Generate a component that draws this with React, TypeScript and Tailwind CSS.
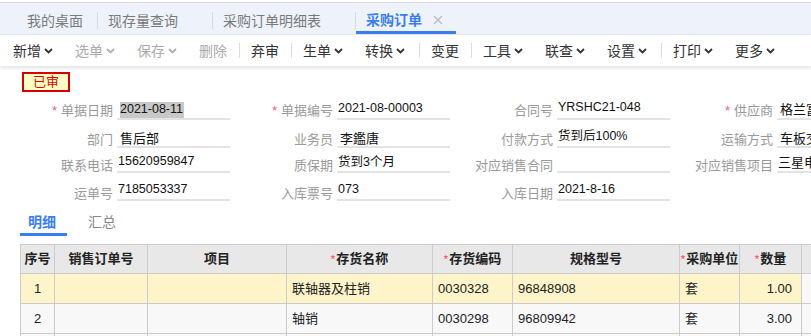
import React from "react";

const FONT = { fontFamily: '"Liberation Sans", "Noto Sans CJK SC", sans-serif' };

function Chevron({ gray }: { gray?: boolean }) {
  return (
    <svg width="9" height="6" viewBox="0 0 9 6" className="ml-[3px] mt-[1px]">
      <path d="M1 1 L4.5 4.5 L8 1" fill="none" stroke={gray ? "#b0b0b0" : "#333"} strokeWidth="1.8" />
    </svg>
  );
}

function Tool({ label, w, drop, gray }: { label: string; w: string; drop?: boolean; gray?: boolean }) {
  return (
    <div className={`flex items-center ${w} ${gray ? "text-[#aaaaaa]" : "text-[#333]"}`}>
      <span>{label}</span>
      {drop && <Chevron gray={gray} />}
    </div>
  );
}

const ToolSep = () => <div className="w-px h-[15px] bg-[#dddddd] mr-[11px]" />;

const TabSep = () => <div className="w-px h-[17px] bg-[#d6dbe3] self-center mt-[4px]" />;

function Field({
  label,
  value,
  req,
  pl = "pl-[1px]",
  pb,
  vpb,
  hl,
  big,
}: {
  label: string;
  value?: string;
  req?: boolean;
  pl?: string;
  pb: string;
  vpb: string;
  hl?: boolean;
  big?: boolean;
}) {
  return (
    <div className="flex items-end w-[220px] shrink-0">
      <div className={`w-[113px] shrink-0 text-right text-[13px] leading-[12px] text-[#9a9a9a] ${pb}`}>
        {req && <span className="text-[#f0607a] mr-[4px]">*</span>}
        {label}
      </div>
      <div className={`ml-[4px] w-[113px] shrink-0 h-full flex items-end border-b-2 border-[#e3e3e3] whitespace-nowrap overflow-hidden ${pl}`}>
        <span
          className={`${big ? "text-[13px]" : "text-[12.5px]"} leading-[15px] text-[#111] ${vpb} ${hl ? "bg-[#c8c8c8] pr-[1px]" : ""}`}
        >
          {value}
        </span>
      </div>
    </div>
  );
}

const cols = [
  { w: "w-[34px]", t: "序号" },
  { w: "w-[93px]", t: "销售订单号" },
  { w: "w-[139px]", t: "项目" },
  { w: "w-[146px]", t: "存货名称", req: true },
  { w: "w-[80px]", t: "存货编码", req: true },
  { w: "w-[167px]", t: "规格型号" },
  { w: "w-[60px]", t: "采购单位", req: true },
  { w: "w-[62px]", t: "数量", req: true },
  { w: "w-[60px]", t: "" },
];

const rows = [
  ["1", "", "", "联轴器及柱销", "0030328", "96848908", "套", "1.00", ""],
  ["2", "", "", "轴销", "0030298", "96809942", "套", "3.00", ""],
];

export default function App() {
  return (
    <div className="w-[811px] h-[336px] overflow-hidden bg-white" style={FONT}>
      <div className="h-[3px] border-b border-[#dcdcdc]" />
      {/* page tabs */}
      <div className="flex h-[32px] bg-[#eef3fb] pl-[16px] text-[14px] leading-[20px] border-b border-[#e6ebf2]">
        <div className="flex items-center pl-[11px] pr-[14px] pt-[5px] text-[#7a7a7a]">我的桌面</div>
        <TabSep />
        <div className="flex items-center pl-[10px] pr-[34px] pt-[5px] text-[#7a7a7a]">现存量查询</div>
        <TabSep />
        <div className="flex items-center pl-[10px] pr-[34px] pt-[5px] text-[#7a7a7a]">采购订单明细表</div>
        <TabSep />
        <div className="flex items-center pl-[10px] pr-[13px] pt-[5px] border-b-[3px] border-[#3a7df0] text-[#3a7df0] font-bold">
          <span>采购订单</span>
          <svg width="10" height="10" viewBox="0 0 10 10" className="ml-[11px]">
            <path d="M1 1 L9 9 M9 1 L1 9" stroke="#bbbbbb" strokeWidth="1.3" />
          </svg>
        </div>
      </div>
      {/* toolbar */}
      <div className="relative z-10 flex items-center h-[31px] pl-[13px] text-[14px] leading-[20px] bg-white shadow-[0_2px_4px_rgba(0,0,0,0.12)]">
        <Tool label="新增" w="w-[62px]" drop />
        <Tool label="选单" w="w-[62px]" drop gray />
        <Tool label="保存" w="w-[62px]" drop gray />
        <Tool label="删除" w="w-[40px]" gray />
        <ToolSep />
        <Tool label="弃审" w="w-[40px]" />
        <ToolSep />
        <Tool label="生单" w="w-[62px]" drop />
        <Tool label="转换" w="w-[54px]" drop />
        <ToolSep />
        <Tool label="变更" w="w-[40px]" />
        <ToolSep />
        <Tool label="工具" w="w-[62px]" drop />
        <Tool label="联查" w="w-[62px]" drop />
        <Tool label="设置" w="w-[54px]" drop />
        <ToolSep />
        <Tool label="打印" w="w-[62px]" drop />
        <Tool label="更多" w="w-[62px]" drop />
      </div>
      {/* status */}
      <div className="ml-[22px] mt-[6px] w-[48px] h-[20px] border-2 border-[#d60000] bg-[#ffffc6] flex items-center justify-center text-[13px] leading-[16px] text-[#e00000]">
        已审
      </div>
      {/* form */}
      <div className="flex h-[28px]">
        <Field label="单据日期" value="2021-08-11" req pb="pb-[3px]" vpb="pb-[1px]" pl="pl-[3px]" hl />
        <Field label="单据编号" value="2021-08-00003" req pb="pb-[3px]" vpb="pb-[2px]" />
        <Field label="合同号" value="YRSHC21-048" pb="pb-[3px]" vpb="pb-[3px]" />
        <Field label="供应商" value="格兰富水泵" req pb="pb-[3px]" vpb="pb-[1px]" pl="pl-[3px]" big />
      </div>
      <div className="flex h-[28px]">
        <Field label="部门" value="售后部" pb="pb-[2px]" vpb="pb-[0px]" pl="pl-[3px]" big />
        <Field label="业务员" value="李鑑唐" pb="pb-[2px]" vpb="pb-[0px]" pl="pl-[3px]" big />
        <Field label="付款方式" value="货到后100%" pb="pb-[2px]" vpb="pb-[2px]" />
        <Field label="运输方式" value="车板交货" pb="pb-[2px]" vpb="pb-[0px]" pl="pl-[3px]" big />
      </div>
      <div className="flex h-[25px]">
        <Field label="联系电话" value="15620959847" pb="pb-[1px]" vpb="pb-[2px]" />
        <Field label="质保期" value="货到3个月" pb="pb-[1px]" vpb="pb-[1px]" />
        <Field label="对应销售合同" value="" pb="pb-[1px]" vpb="pb-[1px]" />
        <Field label="对应销售项目" value="三星电子" pb="pb-[1px]" vpb="pb-[1px]" big />
      </div>
      <div className="flex h-[28px]">
        <Field label="运单号" value="7185053337" pb="pb-[1px]" vpb="pb-[2px]" />
        <Field label="入库票号" value="073" pb="pb-[1px]" vpb="pb-[2px]" />
        <Field label="入库日期" value="2021-8-16" pb="pb-[1px]" vpb="pb-[2px]" />
        <div className="w-[220px]" />
      </div>
      {/* detail tabs */}
      <div className="flex items-end h-[35px] ml-[20px] text-[14px] leading-[20px]">
        <div className="pl-[8px] pr-[11px] pb-[1px] border-b-[3px] border-[#3a7df0] text-[#3a7df0] font-bold">明细</div>
        <div className="ml-[21px] pb-[4px] text-[#888888]">汇总</div>
      </div>
      {/* grid */}
      <div className="ml-[20px] mt-[8px] w-max text-[13px] leading-[16px]">
        <div className="flex h-[30px] border-t border-b border-l border-[#cccccc] bg-[#e8e8e8] font-bold text-[#222]">
          {cols.map((c, i) => (
            <div key={i} className={`${c.w} shrink-0 border-r border-[#cccccc] flex items-center justify-center whitespace-nowrap`}>
              {c.req && <span className="text-[#ff3355] text-[11px] self-start mt-[6px] mr-[1px] font-normal">*</span>}
              {c.t}
            </div>
          ))}
        </div>
        {rows.map((r, ri) => (
          <div
            key={ri}
            className={`flex h-[30px] border-b border-l border-[#cccccc] text-[#222] ${ri === 0 ? "bg-[#fdf5c9]" : "bg-[#f8f8f8]"}`}
          >
            {r.map((v, ci) => (
              <div
                key={ci}
                className={`${cols[ci].w} shrink-0 border-r border-[#cccccc] flex items-center whitespace-nowrap ${
                  ci === 0 ? "justify-center" : ci === 7 ? "justify-end pr-[9px]" : "pl-[5px]"
                } ${ci === 8 ? "bg-[#f8f8f8]" : ""}`}
              >
                {v}
              </div>
            ))}
          </div>
        ))}
        <div className="flex h-[10px] border-l border-[#cccccc] bg-[#f8f8f8]">
          {cols.map((c, i) => (
            <div key={i} className={`${c.w} shrink-0 border-r border-[#cccccc]`} />
          ))}
        </div>
      </div>
    </div>
  );
}
